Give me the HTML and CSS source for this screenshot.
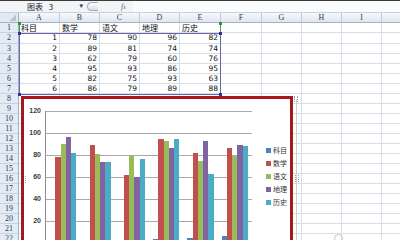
FILE: index.html
```html
<!DOCTYPE html>
<html>
<head>
<meta charset="utf-8">
<link rel="stylesheet" href="styles.css">
</head>
<body>
<div class="app">
  <div class="topbar">
    <div class="namebox"><span class="name">图表 3</span><span class="arrow">▾</span></div>
    <div class="knob"></div>
    <div class="fx"><i>f</i><sub>x</sub></div>
    <div class="formula"></div>
  </div>
  <div class="sheet">
    <div class="grid">
      <div class="corner"></div><div class="ch">A</div><div class="ch">B</div><div class="ch">C</div><div class="ch">D</div><div class="ch">E</div><div class="ch">F</div><div class="ch">G</div><div class="ch">H</div><div class="ch">I</div><div class="ch"></div>
      <div class="rh">1</div><div class="c t">科目</div><div class="c t">数学</div><div class="c t">语文</div><div class="c t">地理</div><div class="c t">历史</div><div class="c"></div><div class="c"></div><div class="c"></div><div class="c"></div><div class="c"></div>
      <div class="rh">2</div><div class="c n">1</div><div class="c n">78</div><div class="c n">90</div><div class="c n">96</div><div class="c n">82</div><div class="c"></div><div class="c"></div><div class="c"></div><div class="c"></div><div class="c"></div>
      <div class="rh">3</div><div class="c n">2</div><div class="c n">89</div><div class="c n">81</div><div class="c n">74</div><div class="c n">74</div><div class="c"></div><div class="c"></div><div class="c"></div><div class="c"></div><div class="c"></div>
      <div class="rh">4</div><div class="c n">3</div><div class="c n">62</div><div class="c n">79</div><div class="c n">60</div><div class="c n">76</div><div class="c"></div><div class="c"></div><div class="c"></div><div class="c"></div><div class="c"></div>
      <div class="rh">5</div><div class="c n">4</div><div class="c n">95</div><div class="c n">93</div><div class="c n">86</div><div class="c n">95</div><div class="c"></div><div class="c"></div><div class="c"></div><div class="c"></div><div class="c"></div>
      <div class="rh">6</div><div class="c n">5</div><div class="c n">82</div><div class="c n">75</div><div class="c n">93</div><div class="c n">63</div><div class="c"></div><div class="c"></div><div class="c"></div><div class="c"></div><div class="c"></div>
      <div class="rh">7</div><div class="c n">6</div><div class="c n">86</div><div class="c n">79</div><div class="c n">89</div><div class="c n">88</div><div class="c"></div><div class="c"></div><div class="c"></div><div class="c"></div><div class="c"></div>
      <div class="rh">8</div><div class="c"></div><div class="c"></div><div class="c"></div><div class="c"></div><div class="c"></div><div class="c"></div><div class="c"></div><div class="c"></div><div class="c"></div><div class="c"></div>
      <div class="rh">9</div><div class="c"></div><div class="c"></div><div class="c"></div><div class="c"></div><div class="c"></div><div class="c"></div><div class="c"></div><div class="c"></div><div class="c"></div><div class="c"></div>
      <div class="rh">10</div><div class="c"></div><div class="c"></div><div class="c"></div><div class="c"></div><div class="c"></div><div class="c"></div><div class="c"></div><div class="c"></div><div class="c"></div><div class="c"></div>
      <div class="rh">11</div><div class="c"></div><div class="c"></div><div class="c"></div><div class="c"></div><div class="c"></div><div class="c"></div><div class="c"></div><div class="c"></div><div class="c"></div><div class="c"></div>
      <div class="rh">12</div><div class="c"></div><div class="c"></div><div class="c"></div><div class="c"></div><div class="c"></div><div class="c"></div><div class="c"></div><div class="c"></div><div class="c"></div><div class="c"></div>
      <div class="rh">13</div><div class="c"></div><div class="c"></div><div class="c"></div><div class="c"></div><div class="c"></div><div class="c"></div><div class="c"></div><div class="c"></div><div class="c"></div><div class="c"></div>
      <div class="rh">14</div><div class="c"></div><div class="c"></div><div class="c"></div><div class="c"></div><div class="c"></div><div class="c"></div><div class="c"></div><div class="c"></div><div class="c"></div><div class="c"></div>
      <div class="rh">15</div><div class="c"></div><div class="c"></div><div class="c"></div><div class="c"></div><div class="c"></div><div class="c"></div><div class="c"></div><div class="c"></div><div class="c"></div><div class="c"></div>
      <div class="rh">16</div><div class="c"></div><div class="c"></div><div class="c"></div><div class="c"></div><div class="c"></div><div class="c"></div><div class="c"></div><div class="c"></div><div class="c"></div><div class="c"></div>
      <div class="rh">17</div><div class="c"></div><div class="c"></div><div class="c"></div><div class="c"></div><div class="c"></div><div class="c"></div><div class="c"></div><div class="c"></div><div class="c"></div><div class="c"></div>
      <div class="rh">18</div><div class="c"></div><div class="c"></div><div class="c"></div><div class="c"></div><div class="c"></div><div class="c"></div><div class="c"></div><div class="c"></div><div class="c"></div><div class="c"></div>
      <div class="rh">19</div><div class="c"></div><div class="c"></div><div class="c"></div><div class="c"></div><div class="c"></div><div class="c"></div><div class="c"></div><div class="c"></div><div class="c"></div><div class="c"></div>
      <div class="rh">20</div><div class="c"></div><div class="c"></div><div class="c"></div><div class="c"></div><div class="c"></div><div class="c"></div><div class="c"></div><div class="c"></div><div class="c"></div><div class="c"></div>
      <div class="rh">21</div><div class="c"></div><div class="c"></div><div class="c"></div><div class="c"></div><div class="c"></div><div class="c"></div><div class="c"></div><div class="c"></div><div class="c"></div><div class="c"></div>
      <div class="rh">22</div><div class="c"></div><div class="c"></div><div class="c"></div><div class="c"></div><div class="c"></div><div class="c"></div><div class="c"></div><div class="c"></div><div class="c"></div><div class="c"></div>
    </div>

    <div class="sel-names"></div>
    <div class="sel-range"></div>
    <div class="dot dot-g dot-tl"></div>
    <div class="dot dot-g dot-tr"></div>
    <div class="dot dot-b dot-ml"></div>
    <div class="dot dot-b dot-mr"></div>
    <div class="dot dot-b dot-bl"></div>
    <div class="dot dot-b dot-br"></div>

    <div class="frame-line"></div>
    <div class="handle handle-tr"></div>
    <div class="handle handle-mr"></div>

    <div class="chart">
      <div class="yaxis">
        <span>120</span><span>100</span><span>80</span><span>60</span><span>40</span><span>20</span><span>0</span>
      </div>
      <div class="plot">
        <div class="group"><i class="bar s1" style="--v:1"></i><i class="bar s2" style="--v:78"></i><i class="bar s3" style="--v:90"></i><i class="bar s4" style="--v:96"></i><i class="bar s5" style="--v:82"></i></div>
        <div class="group"><i class="bar s1" style="--v:2"></i><i class="bar s2" style="--v:89"></i><i class="bar s3" style="--v:81"></i><i class="bar s4" style="--v:74"></i><i class="bar s5" style="--v:74"></i></div>
        <div class="group"><i class="bar s1" style="--v:3"></i><i class="bar s2" style="--v:62"></i><i class="bar s3" style="--v:79"></i><i class="bar s4" style="--v:60"></i><i class="bar s5" style="--v:76"></i></div>
        <div class="group"><i class="bar s1" style="--v:4"></i><i class="bar s2" style="--v:95"></i><i class="bar s3" style="--v:93"></i><i class="bar s4" style="--v:86"></i><i class="bar s5" style="--v:95"></i></div>
        <div class="group"><i class="bar s1" style="--v:5"></i><i class="bar s2" style="--v:82"></i><i class="bar s3" style="--v:75"></i><i class="bar s4" style="--v:93"></i><i class="bar s5" style="--v:63"></i></div>
        <div class="group"><i class="bar s1" style="--v:6"></i><i class="bar s2" style="--v:86"></i><i class="bar s3" style="--v:79"></i><i class="bar s4" style="--v:89"></i><i class="bar s5" style="--v:88"></i></div>
      </div>
      <div class="legend">
        <div class="item"><i class="key s1"></i>科目</div>
        <div class="item"><i class="key s2"></i>数学</div>
        <div class="item"><i class="key s3"></i>语文</div>
        <div class="item"><i class="key s4"></i>地理</div>
        <div class="item"><i class="key s5"></i>历史</div>
      </div>
      <div class="handle-ml"></div>
    </div>

    <div class="cursor-ring"></div>
  </div>
</div>
</body>
</html>
```

FILE: styles.css
```css
* { box-sizing: border-box; margin: 0; padding: 0; }
html, body { width: 400px; height: 240px; overflow: hidden; background: #fff; }
body { font-family: "Noto Sans CJK SC", sans-serif; color: #222; }

.app { width: 400px; height: 240px; display: flex; flex-direction: column; }

/* name box / formula bar */
.topbar {
  height: 13px; flex: none; display: flex; align-items: center;
  border-top: 1px solid #3a3a3a; border-bottom: 1px solid #c7d2df;
  background: #f2f4f7;
}
.namebox { width: 87px; height: 100%; display: flex; align-items: center; padding-left: 27px; }
.name { flex: 1; font-size: 8px; line-height: 11px; word-spacing: 4px; color: #1e1e1e; }
.arrow { font-size: 7px; line-height: 11px; color: #333; margin-right: 4px; font-family: "DejaVu Sans", sans-serif; }
.knob {
  width: 11px; height: 9px; border: 1px solid #a3abb7; border-right: none;
  border-radius: 5px 0 0 5px; background: linear-gradient(#ffffff, #d9dee5);
}
.fx { margin-left: 23px; width: 12px; font-family: "Liberation Serif", serif; font-size: 8px; line-height: 11px; color: #666; }
.fx sub { font-size: 6px; vertical-align: baseline; font-style: italic; }
.formula { flex: 1; height: 11px; background: #fbfcfd; }

/* sheet grid */
.sheet { position: relative; flex: 1; }
.grid {
  display: grid;
  grid-template-columns: 19px 41px 40px 40px 40px 41px 41px 40px 40px 40px 40px;
  grid-template-rows: 10px 10px 11px;
  grid-auto-rows: 10px;
}
.c {
  border-right: 1px solid #d8dee7; border-bottom: 1px solid #d8dee7;
  font-size: 8px; line-height: 9px; white-space: nowrap; overflow: hidden;
}
.c.t { padding-left: 2px; font-family: "Noto Sans CJK SC", sans-serif; font-size: 8px; line-height: 9px; color: #111; }
.c.n { text-align: right; padding-right: 2px; font-family: "DejaVu Sans", sans-serif; font-size: 7.5px; line-height: 10px; color: #111; }

.ch {
  background: linear-gradient(#f7f9fc, #dfe6ef);
  border-right: 1px solid #bccadb; border-bottom: 1px solid #9fb2c8;
  text-align: center; font-family: "Liberation Serif", serif; font-size: 8px; line-height: 10px; color: #3a3a3a;
}
.corner {
  background-color: #e3e9f1;
  background-image: linear-gradient(135deg, transparent 55%, #b8c3d1 55%);
  background-size: 8px 7px; background-position: right 2px bottom 1px; background-repeat: no-repeat;
  border-right: 1px solid #9fb2c8; border-bottom: 1px solid #9fb2c8;
}
.rh {
  background: #e4ebf5;
  border-right: 1px solid #9fb2c8; border-bottom: 1px solid #c7d3e3;
  text-align: center; font-family: "Liberation Serif", serif; font-size: 8px; line-height: 10px; color: #2f3b4f;
}

/* chart data range highlight */
.sel-names { position: absolute; left: 19px; top: 10px; width: 202px; height: 11px; border-left: 1px solid #3d9a45; border-right: 1px solid #3d9a45; }
.sel-range { position: absolute; left: 19px; top: 20px; width: 202px; height: 62px; border: 1px solid #6b64a6; }
.dot { position: absolute; width: 3px; height: 3px; }
.dot-g { background: #2f8f3a; }
.dot-b { background: #2734a8; }
.dot-tl { left: 18px; top: 9px; }
.dot-tr { left: 219px; top: 9px; }
.dot-ml { left: 18px; top: 19px; }
.dot-mr { left: 219px; top: 19px; }
.dot-bl { left: 18px; top: 80px; }
.dot-br { left: 219px; top: 80px; }

/* chart selection frame bits */
.frame-line { position: absolute; left: 296px; top: 86px; width: 1px; height: 150px; background: #c9d0da; }
.handle { position: absolute; width: 4px; height: 6px; border-left: 1px dotted #8d96a3; border-right: 1px dotted #8d96a3; }
.handle-tr { left: 294px; top: 83px; }
.handle-mr { left: 295px; top: 162px; height: 7px; }
.cursor-ring { position: absolute; left: 334px; top: 221px; width: 9px; height: 9px; border: 1px solid #c4c4c4; border-radius: 50%; }

/* chart */
.chart {
  position: absolute; left: 21px; top: 83px; width: 272px; height: 160px;
  border: 3px solid #a9151c; background: #fff;
  display: flex; align-items: flex-start; padding-top: 12px;
}
.yaxis {
  width: 17px; margin-top: -11px; margin-right: 4px;
  display: flex; flex-direction: column;
  font-family: "Liberation Sans", sans-serif; font-weight: bold; font-size: 7px; color: #3c3c3c;
}
.yaxis span { height: 22px; line-height: 22px; text-align: right; }
.plot {
  width: 207px; height: 133px; flex: none; margin-right: 14px;
  border-left: 1px solid #8e8e8e; border-bottom: 1px solid #8e8e8e;
  background: repeating-linear-gradient(to bottom, #a9a9a9 0 1px, transparent 1px 22px);
  display: flex; align-items: flex-end;
}
.group { flex: 1; height: 100%; display: flex; align-items: flex-end; padding: 0 4px; }
.bar { flex: 1; height: calc(var(--v) * 1.1px); }
.s1 { background: #4f81bd; }
.s2 { background: #c0504d; }
.s3 { background: #9bbb59; }
.s4 { background: #8064a2; }
.s5 { background: #4bacc6; }

.legend { margin-top: 33px; display: flex; flex-direction: column; }
.item { height: 13px; display: flex; align-items: center; font-size: 7px; line-height: 13px; color: #333; white-space: nowrap; }
.key { width: 5px; height: 5px; margin-right: 2px; }

.handle-ml { position: absolute; left: 1px; top: 77px; width: 1px; height: 7px; border-left: 1px dotted #9aa2ad; }
```
